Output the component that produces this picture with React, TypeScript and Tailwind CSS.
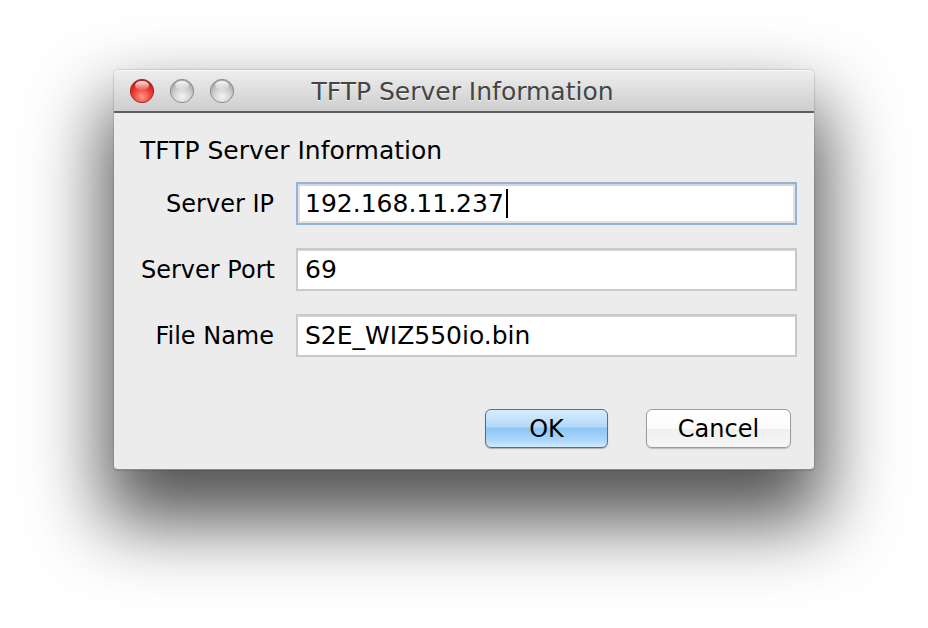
import React from "react";

function Light({ kind }: { kind: "red" | "gray" }) {
  const id = kind === "red" ? "gr" : "gg";
  return (
    <svg width="26" height="26" viewBox="0 0 26 26">
      <defs>
        <radialGradient id={id + "b"} cx="50%" cy="75%" r="65%">
          {kind === "red" ? (
            <>
              <stop offset="0%" stopColor="#ff9a8c" />
              <stop offset="55%" stopColor="#f0443a" />
              <stop offset="100%" stopColor="#c4201a" />
            </>
          ) : (
            <>
              <stop offset="0%" stopColor="#f4f4f4" />
              <stop offset="55%" stopColor="#d2d2d2" />
              <stop offset="100%" stopColor="#a9a9a9" />
            </>
          )}
        </radialGradient>
        <linearGradient id={id + "h"} x1="0" y1="0" x2="0" y2="1">
          <stop offset="0%" stopColor="#ffffff" stopOpacity="0.95" />
          <stop offset="100%" stopColor="#ffffff" stopOpacity="0.1" />
        </linearGradient>
      </defs>
      <circle
        cx="13"
        cy="13"
        r="11.6"
        fill={`url(#${id}b)`}
        stroke={kind === "red" ? "#9e2a22" : "#8e8e8e"}
        strokeWidth="1"
      />
      <ellipse cx="13" cy="7.5" rx="7" ry="4.5" fill={`url(#${id}h)`} />
    </svg>
  );
}

function Field({ value, focused }: { value: string; focused?: boolean }) {
  return (
    <div
      className={
        "h-[43px] flex items-center pl-[7px] bg-white " +
        (focused
          ? "border-2 border-[#94b3d6] shadow-[inset_0_2px_0_#d6d6d6,inset_2px_0_0_#e2e2e2,inset_-2px_0_0_#e2e2e2,inset_0_-2px_0_#e2e2e2]"
          : "border-2 border-[#c9c9c9] shadow-[inset_0_1px_0_#d8d8d8]")
      }
    >
      <span className="text-[25px] leading-none text-black">{value}</span>
      {focused && <span className="ml-[2px] w-[2px] h-[29px] bg-black" />}
    </div>
  );
}

export default function App() {
  return (
    <div
      className="w-[928px] h-[628px] bg-white flex justify-center pt-[70px]"
      style={{ fontFamily: '"DejaVu Sans", "Liberation Sans", sans-serif' }}
    >
      <div className="w-[700px] h-[400px] flex flex-col bg-[#ececec] rounded-t-[5px] rounded-b-[4px] shadow-[0_42px_75px_10px_rgba(0,0,0,0.68),0_0_2px_rgba(0,0,0,0.35)] border-b border-[#8a8a8a]">
        <div className="h-[43px] shrink-0 relative flex items-center rounded-t-[5px] bg-gradient-to-b from-[#eeeeee] to-[#cecece] border-b-2 border-[#5f5f5f] shadow-[inset_0_1px_0_#f8f8f8]">
          <div className="flex items-center gap-[14px] pl-[15px] pt-[1px]">
            <Light kind="red" />
            <Light kind="gray" />
            <Light kind="gray" />
          </div>
          <div className="absolute inset-0 flex items-center justify-center pr-[3px] pt-[2px]">
            <span className="text-[25px] text-[#454545] [text-shadow:0_1px_0_rgba(255,255,255,0.7)]">
              TFTP Server Information
            </span>
          </div>
        </div>
        <div className="flex flex-col pt-[24px] pl-[27px] pr-[17px]">
          <div className="text-[25px] leading-[28px] text-black -ml-[1px]">TFTP Server Information</div>
          <div className="mt-[17px] grid grid-cols-[132px_1fr] gap-x-[23px] gap-y-[23px] items-center">
            <div className="text-[24px] text-black text-right whitespace-nowrap -mr-[1px]">Server IP</div>
            <Field value="192.168.11.237" focused />
            <div className="text-[24px] text-black text-right whitespace-nowrap -mr-[1px]">Server Port</div>
            <Field value="69" />
            <div className="text-[24px] text-black text-right whitespace-nowrap -mr-[1px]">File Name</div>
            <Field value="S2E_WIZ550io.bin" />
          </div>
          <div className="mt-[52px] flex justify-end gap-[38px] pr-[6px]">
            <button className="w-[123px] h-[39px] rounded-[6px] border border-[#5b6c86] text-[24px] text-black bg-[linear-gradient(to_bottom,#d9ecfc_0%,#b3d9fa_45%,#8ec6f4_50%,#a9d6fa_80%,#cfeafd_100%)] shadow-[0_1px_1px_rgba(0,0,0,0.25)]">
              OK
            </button>
            <button className="w-[145px] h-[39px] rounded-[6px] border border-[#9c9c9c] text-[24px] text-black bg-[linear-gradient(to_bottom,#ffffff_0%,#fbfbfb_50%,#f0f0f0_52%,#f6f6f6_100%)] shadow-[0_1px_1px_rgba(0,0,0,0.2)]">
              Cancel
            </button>
          </div>
        </div>
      </div>
    </div>
  );
}
